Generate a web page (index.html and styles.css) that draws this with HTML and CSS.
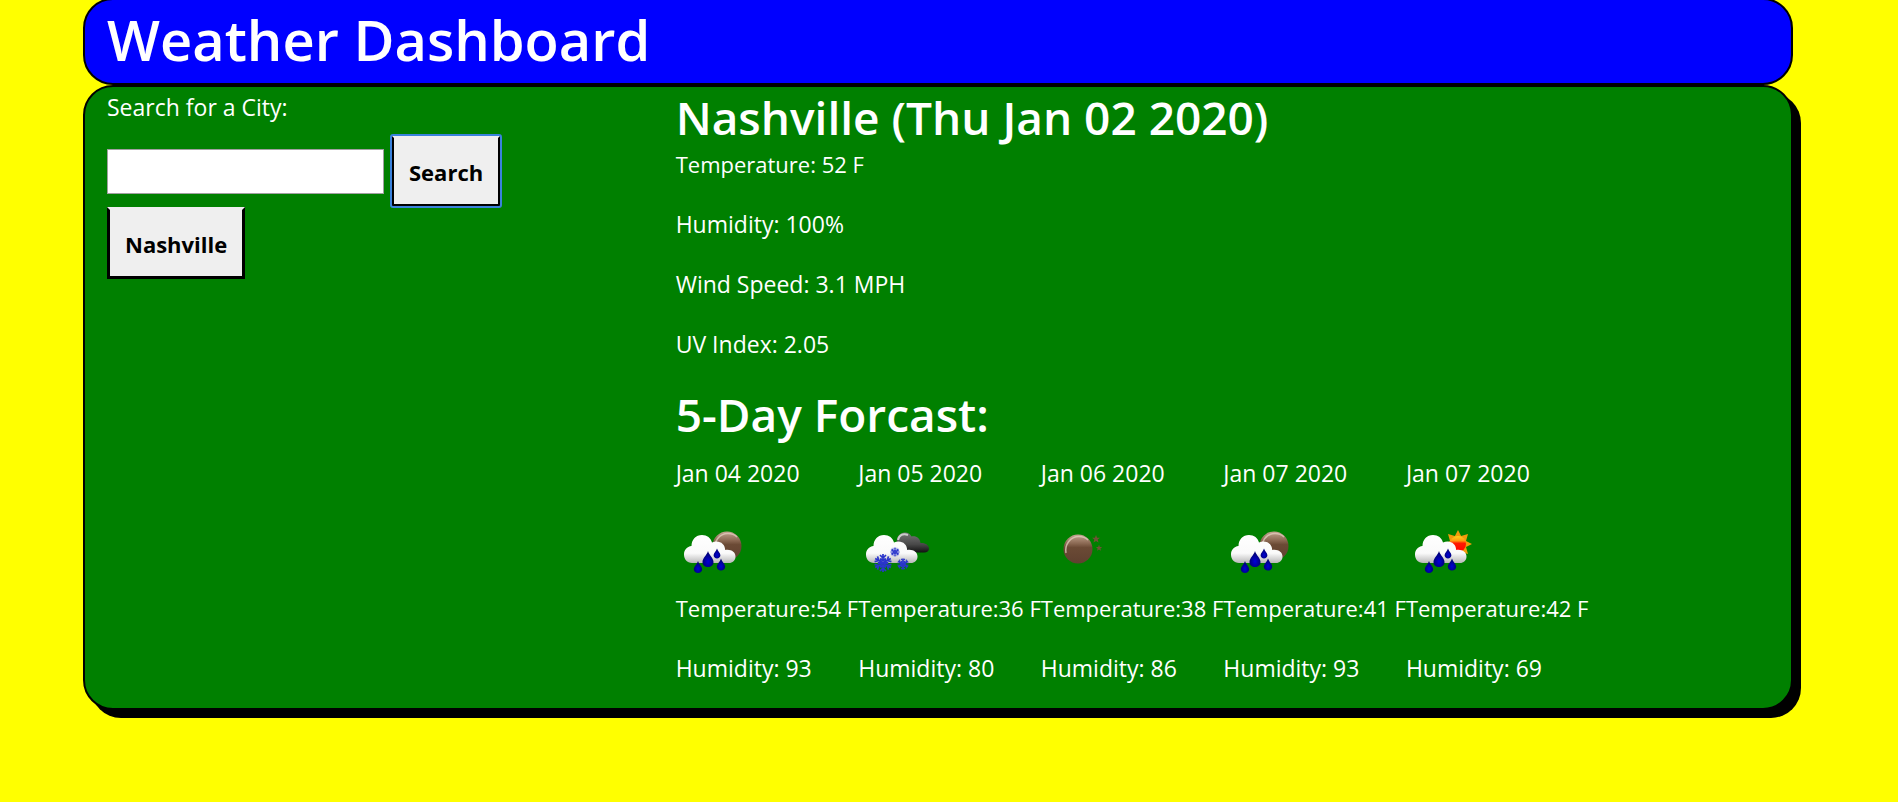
FILE: index.html
```html
<!DOCTYPE html>
<html lang="en">
<head>
<meta charset="utf-8">
<title>Weather Dashboard</title>
<link rel="stylesheet" href="styles.css">
</head>
<body>
<svg class="defs" aria-hidden="true">
  <defs>
    <linearGradient id="cloudFill" x1="0" y1="20" x2="0" y2="48" gradientUnits="userSpaceOnUse">
      <stop offset="0" stop-color="#fff"/><stop offset=".65" stop-color="#fafafa"/><stop offset="1" stop-color="#b8b8b8"/>
    </linearGradient>
    <linearGradient id="darkFill" x1="0" y1="0" x2="0" y2="1">
      <stop offset="0" stop-color="#777"/><stop offset=".6" stop-color="#484848"/><stop offset="1" stop-color="#111"/>
    </linearGradient>
    <linearGradient id="moonFill" x1="0" y1="0" x2="0" y2="1">
      <stop offset="0" stop-color="#c3a591"/><stop offset=".3" stop-color="#8c6a54"/><stop offset=".45" stop-color="#6b4a35"/><stop offset="1" stop-color="#5f4130"/>
    </linearGradient>
    <linearGradient id="sunFill" x1="0" y1="0" x2="0" y2="1">
      <stop offset="0" stop-color="#ffd21c"/><stop offset=".3" stop-color="#ff9a10"/><stop offset=".45" stop-color="#ff1a00"/><stop offset="1" stop-color="#f00"/>
    </linearGradient>
    <radialGradient id="dropFill" cx=".5" cy=".65" r=".5">
      <stop offset="0" stop-color="#0000d8"/><stop offset="1" stop-color="#000078"/>
    </radialGradient>
    <path id="cloud" fill="url(#cloudFill)" d="M16 48C11 48 8 44 8 39.500C8 35 11 31.500 15.500 31C15.500 24.500 20 20 26 20C31 20 35 23 36 27.500C37.500 26.700 39 26.500 40.500 26.500C45.500 26.500 49 30 49.200 35C55 34 59.500 37 59.500 41.500C59.500 45.500 56.500 48 53 48Z"/>
    <path id="drop" fill="url(#dropFill)" d="M0 -8C1 -4 5.500 -1 5.500 3C5.500 6.200 3 8 0 8C-3 8 -5.500 6.200 -5.500 3C-5.500 -1 -1 -4 0 -8Z"/>
    <g id="drops">
      <use href="#drop" x="32" y="44"/>
      <use href="#drop" transform="translate(41 38.500) scale(.62)"/>
      <use href="#drop" transform="translate(22 52) scale(.76)"/>
      <use href="#drop" transform="translate(45 49.500) scale(.76)"/>
    </g>
    <g id="arm" fill="none" stroke="#2a35cc" stroke-width="1.700">
      <path d="M0 0V-9M-3 -8L0 -5L3 -8M-2.500 -4.500L0 -2L2.500 -4.500"/>
    </g>
    <g id="flake">
      <use href="#arm"/><use href="#arm" transform="rotate(60)"/><use href="#arm" transform="rotate(120)"/>
      <use href="#arm" transform="rotate(180)"/><use href="#arm" transform="rotate(240)"/><use href="#arm" transform="rotate(300)"/>
    </g>
    <path id="star" fill="#6f5335" d="M0 -4L1.100 -1.300L4 -1.200L1.700 .600L2.500 3.500L0 1.900L-2.500 3.500L-1.700 .600L-4 -1.200L-1.100 -1.300Z"/>
    <g id="moon">
      <circle r="14.500" fill="url(#moonFill)"/>
      <path d="M-12 4C-13.500 -4 -8 -12.500 1 -12.500C5 -12.500 8 -11 10 -9" fill="none" stroke="#e3cdbf" stroke-width="1.500" opacity=".75"/>
    </g>
    <g id="rainNight"><use href="#moon" x="51" y="31"/><use href="#cloud"/><use href="#drops"/></g>
  </defs>
</svg>

<div class="container">
  <header class="banner">
    <h1>Weather Dashboard</h1>
  </header>
  <main class="panel">
    <form class="search">
      <label class="search-label" for="city">Search for a City:</label>
      <div class="search-row">
        <input class="search-input" id="city" type="text">
        <button class="btn btn-active" type="button">Search</button>
      </div>
      <button class="btn" type="button">Nashville</button>
    </form>
    <section class="report">
      <h2>Nashville (Thu Jan 02 2020)</h2>
      <p class="temp">Temperature: 52 F</p>
      <p>Humidity: 100%</p>
      <p>Wind Speed: 3.1 MPH</p>
      <p>UV Index: 2.05</p>
      <h2 class="forecast-title">5-Day Forcast:</h2>
      <div class="forecast">
        <article class="day">
          <p>Jan 04 2020</p>
          <svg class="icon" viewBox="0 0 75 75"><use href="#rainNight"/></svg>
          <p class="temp">Temperature:54 F</p>
          <p>Humidity: 93</p>
        </article>
        <article class="day">
          <p>Jan 05 2020</p>
          <svg class="icon" viewBox="0 0 75 75">
            <path fill="url(#darkFill)" d="M39 28C38 22 42 17.500 47 17.500C50 17.500 52 19 53.500 21.500C58 20.500 62 23 62.500 28C67 27.500 71 30 71 33.500C71 36 69 37.500 66 37.500H44Z"/>
            <path d="M40 25C41 20 45 18 50 20" fill="none" stroke="#ccc" stroke-width="2"/>
            <use href="#cloud"/>
            <use href="#flake" transform="translate(25 48)"/>
            <use href="#flake" transform="translate(37 37) scale(.52)"/>
            <use href="#flake" transform="translate(45 49) scale(.65)"/>
          </svg>
          <p class="temp">Temperature:36 F</p>
          <p>Humidity: 80</p>
        </article>
        <article class="day">
          <p>Jan 06 2020</p>
          <svg class="icon" viewBox="0 0 75 75">
            <use href="#moon" x="37" y="34"/>
            <use href="#star" x="55" y="24"/>
            <use href="#star" transform="translate(58 33) scale(.8)"/>
          </svg>
          <p class="temp">Temperature:38 F</p>
          <p>Humidity: 86</p>
        </article>
        <article class="day">
          <p>Jan 07 2020</p>
          <svg class="icon" viewBox="0 0 75 75"><use href="#rainNight"/></svg>
          <p class="temp">Temperature:41 F</p>
          <p>Humidity: 93</p>
        </article>
        <article class="day">
          <p>Jan 07 2020</p>
          <svg class="icon" viewBox="0 0 75 75">
            <path fill="#f39a0c" transform="translate(52 29)" d="M0 -14L3.100 -8L10 -10L8 -3.100L14 0L8 3.100L10 10L3.100 8L0 14L-3.100 8L-10 10L-8 3.100L-14 0L-8 -3.100L-10 -10L-3.100 -8Z"/>
            <circle cx="52" cy="29" r="8" fill="url(#sunFill)"/>
            <use href="#cloud" x="1"/><use href="#drops" x="1"/>
          </svg>
          <p class="temp">Temperature:42 F</p>
          <p>Humidity: 69</p>
        </article>
      </div>
    </section>
  </main>
</div>
</body>
</html>
```
FILE: styles.css
```css
* {
  box-sizing: border-box;
}

body {
  margin: 0;
  padding: 0 22px 24px 0;
  background: #ffff00;
  color: #fff;
  font-family: "Open Sans", "Noto Sans", sans-serif;
  font-size: 23px;
  line-height: 36px;
}

.defs {
  position: absolute;
  width: 0;
  height: 0;
}

.container {
  max-width: 1710px;
  margin: -2px auto 0;
}

.banner {
  padding: 4px 22px 8px;
  background: #0000ff;
  border: 2px solid #000;
  border-radius: 30px;
}

h1,
h2,
p {
  margin: 0;
}

h1 {
  font-size: 56px;
  font-weight: 600;
  line-height: 71px;
}

h2 {
  font-size: 46px;
  font-weight: 600;
  line-height: 57px;
}

.panel {
  display: grid;
  grid-template-columns: 1fr 2fr;
  background: #008000;
  border: 2px solid #000;
  border-radius: 30px;
  box-shadow: 8px 8px 0 #000;
}

.search,
.report {
  min-width: 0;
  padding: 2px 20px 0 22px;
}

.search-label {
  display: block;
  margin-bottom: 10px;
}

.search-row {
  display: flex;
  align-items: center;
  gap: 7px;
}

.search-input {
  width: 277px;
  height: 45px;
  padding: 2px 4px;
  border: 1px solid #a0a0a0;
  background: #fff;
  font: inherit;
}

.btn {
  height: 72px;
  padding: 2px 15px 0;
  border: 3px solid #000;
  border-top-color: #efefef;
  background: #efefef;
  color: #000;
  font: inherit;
  font-size: 22px;
  font-weight: 700;
}

.btn-active {
  border-radius: 2px;
  outline: 2px solid #3b82dc;
  outline-offset: -1px;
}

.report p {
  margin-bottom: 24px;
  white-space: nowrap;
}

.report .temp {
  font-size: 22px;
}

.forecast-title {
  margin-bottom: 12px;
}

.forecast {
  display: grid;
  grid-template-columns: repeat(6, minmax(0, 1fr));
  margin-bottom: -2px;
}

.icon {
  display: block;
  width: 75px;
  height: 75px;
}
```
